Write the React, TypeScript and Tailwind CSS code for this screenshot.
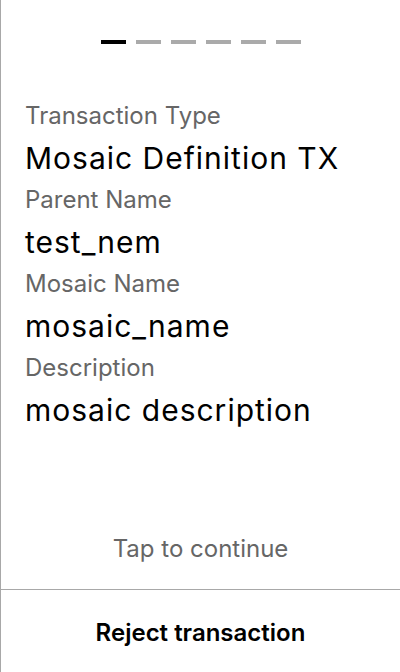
const fields = [
  { label: "Transaction Type", value: "Mosaic Definition TX" },
  { label: "Parent Name", value: "test_nem" },
  { label: "Mosaic Name", value: "mosaic_name" },
  { label: "Description", value: "mosaic description" },
];

export default function App() {
  return (
    <div className="flex h-[672px] w-[400px] flex-col border-l border-[#a8a8a8] bg-white font-['Inter',sans-serif]">
      {/* step indicator */}
      <div className="flex justify-center gap-[10px] pt-10">
        {[0, 1, 2, 3, 4, 5].map((i) => (
          <div key={i} className={i === 0 ? "h-1 w-[25px] bg-black" : "h-1 w-[25px] bg-[#aaaaaa]"} />
        ))}
      </div>

      <div className="flex-1 px-6 pt-[54px]">
        {fields.map((f) => (
          <div key={f.label}>
            <div className="text-[24px] leading-9 text-[#666666]">{f.label}</div>
            <div className="text-[30px] leading-[48px] tracking-[1px] text-black">{f.value}</div>
          </div>
        ))}
      </div>

      <div className="pb-6 text-center text-[24px] leading-8 text-[#666666]">Tap to continue</div>

      <button className="border-t border-[#a8a8a8] pt-[27px] pb-[23px] text-center text-[24px] font-semibold leading-8 text-black">
        Reject transaction
      </button>
    </div>
  );
}
